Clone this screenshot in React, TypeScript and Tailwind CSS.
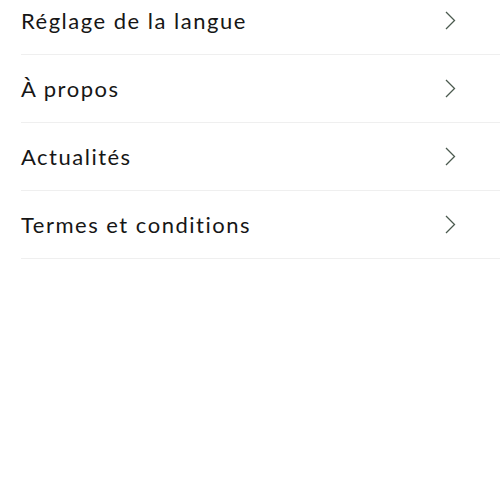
import React from "react";

const items = [
  "Réglage de la langue",
  "À propos",
  "Actualités",
  "Termes et conditions",
];

const Chevron = () => (
  <svg width="11" height="19" viewBox="0 0 11 19" fill="none">
    <path d="M1 1l8.5 8.5L1 18" stroke="#4b5a4f" strokeWidth="1.3" />
  </svg>
);

const App = () => {
  return (
    <div className="min-h-screen bg-white font-['Lato',sans-serif] overflow-hidden">
      <ul className="-mt-[13px] pl-[21px]">
        {items.map((label) => (
          <li
            key={label}
            className="flex h-[68px] items-center justify-between border-b border-[#efefef] pr-[44px]"
          >
            <span className="text-[22px] tracking-[1.5px] text-[#161616]">
              {label}
            </span>
            <Chevron />
          </li>
        ))}
      </ul>
    </div>
  );
};

export default App;
